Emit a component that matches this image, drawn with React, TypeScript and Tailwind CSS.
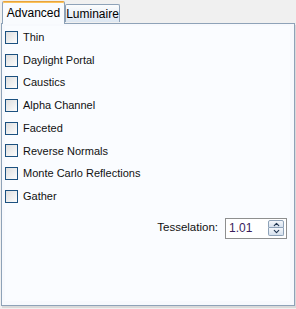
import { ChevronUp, ChevronDown } from "lucide-react";

const options = [
  "Thin",
  "Daylight Portal",
  "Caustics",
  "Alpha Channel",
  "Faceted",
  "Reverse Normals",
  "Monte Carlo Reflections",
  "Gather",
];

function CheckBox({ label }: { label: string }) {
  return (
    <label className="flex h-[22.7px] items-center gap-[5px]">
      <span className="h-[13px] w-[13px] border border-[#1c5180] bg-gradient-to-br from-[#dedede] to-[#fdfdfd]" />
      <span className="text-[11px] text-[#111]">{label}</span>
    </label>
  );
}

export default function App() {
  return (
    <div
      className="flex h-[309px] w-[296px] flex-col bg-[#f0f0f0]"
      style={{ fontFamily: '"Liberation Sans", Arial, sans-serif' }}
    >
      <div className="relative z-10 flex h-[23px] items-end pl-[2px]">
        <div className="-mb-px flex h-[23px] w-[63px] items-center justify-center rounded-t-[2px] border border-b-0 border-[#8ea2b8] border-t-[#e8a33d] bg-[#f9fbfe] pb-[1px] text-[12px] text-black shadow-[inset_0_1px_0_#fbc35a]">
          Advanced
        </div>
        <div className="mb-[1px] flex h-[18px] w-[55px] items-center justify-center rounded-t-[2px] border border-b-0 border-[#8ea2b8] bg-gradient-to-b from-[#fbfcfd] to-[#dde7f2] text-[12px] text-black">
          Luminaire
        </div>
      </div>
      <div className="ml-px flex h-[283px] w-[294px] border border-[#8ea2b8] bg-[#f7f9fd] pb-[4px] pl-[3px] pr-[4px] pt-[2px] shadow-[1px_2px_0_#d9d9d9]">
        <div className="flex flex-1 flex-col bg-[#fafcff]">
          {options.map((o) => (
            <CheckBox key={o} label={o} />
          ))}
          <div className="mt-[10px] flex items-center justify-end gap-[7px] pr-[3px]">
            <span className="text-[11.5px] text-[#111]">Tesselation:</span>
            <div className="flex h-[21px] w-[62px] items-center justify-between border border-[#8e8f8f] bg-white pl-[3px] pr-[2px]">
              <span className="text-[12px] text-[#3a1d5c]">1.01</span>
              <div className="flex flex-col">
                <span className="flex h-[8px] w-[16px] items-center justify-center rounded-t-[2px] border border-[#8ea2b8] bg-gradient-to-b from-[#f4f7fb] to-[#d6e1ee]">
                  <ChevronUp size={9} strokeWidth={3} className="text-[#1f3550]" />
                </span>
                <span className="flex h-[8px] w-[16px] items-center justify-center rounded-b-[2px] border border-t-0 border-[#8ea2b8] bg-gradient-to-b from-[#f4f7fb] to-[#d6e1ee]">
                  <ChevronDown size={9} strokeWidth={3} className="text-[#1f3550]" />
                </span>
              </div>
            </div>
          </div>
        </div>
      </div>
    </div>
  );
}
